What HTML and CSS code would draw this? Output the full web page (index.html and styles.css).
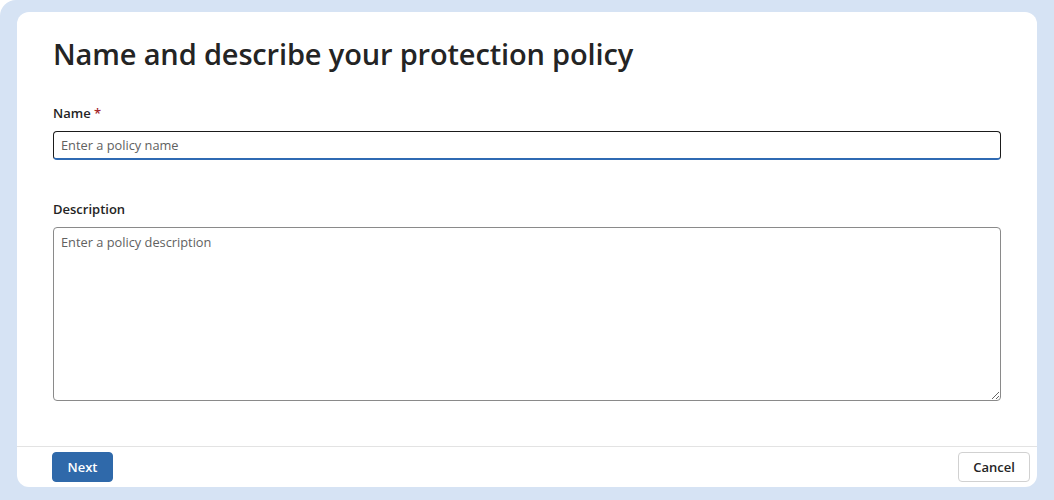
FILE: index.html
```html
<!DOCTYPE html>
<html lang="en">
<head>
<meta charset="utf-8">
<title>Protection policy</title>
<link rel="stylesheet" href="styles.css">
</head>
<body>
<div class="frame">
  <div class="card">
    <div class="content">
      <h1 class="title">Name and describe your protection policy</h1>
      <div class="field">
        <label class="label" for="pname">Name <span class="req">*</span></label>
        <input class="input" id="pname" type="text" placeholder="Enter a policy name">
      </div>
      <div class="field field-desc">
        <label class="label" for="pdesc">Description</label>
        <textarea class="textarea" id="pdesc" placeholder="Enter a policy description"></textarea>
      </div>
    </div>
    <div class="footer">
      <button class="btn btn-primary" type="button">Next</button>
      <button class="btn btn-secondary" type="button">Cancel</button>
    </div>
  </div>
</div>
</body>
</html>
```

FILE: styles.css
```css
html, body {
  margin: 0;
  padding: 0;
  height: 100%;
  background: #ffffff;
}
body {
  font-family: "Open Sans", "Noto Sans", sans-serif;
  color: #242424;
}
.frame {
  box-sizing: border-box;
  height: 500px;
  background: #d6e3f4;
  border-top-left-radius: 16px;
  padding: 12px 17px 13px 17px;
}
.card {
  box-sizing: border-box;
  height: 100%;
  background: #ffffff;
  border-radius: 12px;
  display: flex;
  flex-direction: column;
}
.content {
  flex: 1;
  padding: 23px 36px 0 36px;
}
.title {
  margin: 0 0 30px 0;
  font-size: 29px;
  line-height: 38px;
  font-weight: 600;
  color: #242424;
  letter-spacing: -0.15px;
}
.field {
  display: flex;
  flex-direction: column;
}
.field-desc {
  margin-top: 39px;
}
.label {
  font-size: 13px;
  line-height: 20px;
  font-weight: 600;
  color: #242424;
  margin-bottom: 8px;
}
.req {
  color: #a4262c;
}
.input {
  box-sizing: border-box;
  height: 29px;
  width: 100%;
  border: 1px solid #1b1b1b;
  border-bottom: 2px solid #2f6ab3;
  border-radius: 4px;
  padding: 0 7px;
  font-family: inherit;
  font-size: 12.8px;
  color: #242424;
  background: #fff;
  outline: none;
}
.input::placeholder, .textarea::placeholder {
  color: #616161;
  opacity: 1;
}
.textarea {
  box-sizing: border-box;
  height: 174px;
  width: 100%;
  border: 1px solid #8a8a8a;
  border-radius: 4px;
  padding: 5px 7px;
  font-family: inherit;
  font-size: 12.8px;
  line-height: 18px;
  color: #242424;
  background: #fff;
  resize: vertical;
  outline: none;
}
.footer {
  border-top: 1px solid #e3e3e3;
  display: flex;
  justify-content: space-between;
  align-items: center;
  padding: 5px 7px 5px 35px;
}
.btn {
  box-sizing: border-box;
  height: 30px;
  border-radius: 4px;
  font-family: inherit;
  font-size: 13px;
  font-weight: 600;
  cursor: pointer;
}
.btn-primary {
  width: 61px;
  background: #2f69aa;
  border: 1px solid #2f69aa;
  color: #ffffff;
}
.btn-secondary {
  width: 72px;
  background: #ffffff;
  border: 1px solid #d1d1d1;
  color: #242424;
}
```
